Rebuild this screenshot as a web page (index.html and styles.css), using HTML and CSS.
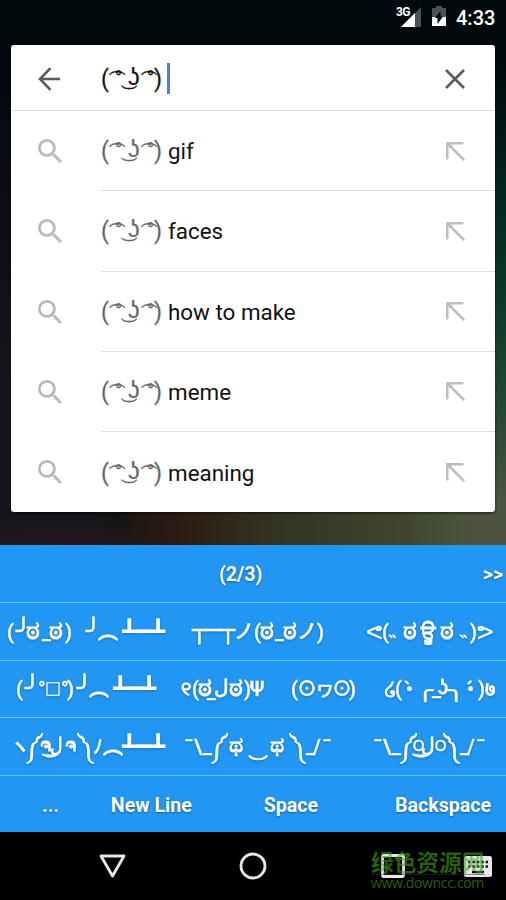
FILE: index.html
```
<!DOCTYPE html>
<html lang="en"><head><meta charset="utf-8"><title>Emoticon keyboard</title><link rel="stylesheet" href="styles.css"></head>
<body>
<svg class="defs" width="0" height="0"><defs>
<symbol id="search" viewBox="3 3 17.5 17.5"><path d="M15.500 14h-.79l-.28-.27A6.470 6.470 0 0 0 16 9.500 6.500 6.500 0 1 0 9.500 16c1.610 0 3.090-.59 4.230-1.570l.27.28v.79l5 4.990L20.490 19l-4.990-5zm-6 0a4.500 4.500 0 1 1 0-9 4.500 4.500 0 0 1 0 9z"/></symbol>
<symbol id="insert" viewBox="0 0 18 18"><path d="M1.200 16.500V1.200h15.300M1.200 1.200l16 16"/></symbol>
<symbol id="lenny" viewBox="0 0 62 34"><g><text x="0" y="25">(</text><text x="4" y="25" font-size="21">&#160;͡</text><text x="14" y="22" font-size="19">°</text><text x="16" y="23" font-size="21">&#160;͜</text><text x="27" y="23" font-size="23">ʖ</text><text x="36" y="25" font-size="21">&#160;͡</text><text x="46" y="22" font-size="19">°</text><text x="53" y="25">)</text></g></symbol>
<g id="table"><text class="box heavy" x="0" y="0" textLength="43" lengthAdjust="spacingAndGlyphs">┻━┻</text></g>
</defs></svg>
<header class="status">
<div class="net"><span>3G</span><svg width="21" height="21" viewBox="0 0 21 21"><path fill="#4b5254" d="M21 0v20H1z"/><path fill="#fff" d="M15 6v14H1z"/></svg></div>
<svg class="battery" width="14" height="21" viewBox="0 0 14 21"><path fill="#4b5254" d="M4 0h6v2h4v9H0V2h4z"/><path fill="#fff" d="M0 11h14v9H0z"/><path d="M8.500 5v5.500H11L5.500 18v-6H3z" fill="#00090b"/></svg>
<time>4:33</time>
</header>
<main class="card">
<div class="query"><svg class="back" width="23" height="24" viewBox="0 0 23 24"><path d="M22 12H2M12.500 1.200 2 12l10.500 10.800"/></svg>
<div class="entry"><svg class="lenny"><use href="#lenny"/></svg><i class="caret"></i></div>
<svg class="clear" width="20" height="20" viewBox="0 0 20 20"><path d="m1 1 18 18M19 1 1 19"/></svg></div>
<div class="item"><svg class="mag"><use href="#search"/></svg><div class="label"><svg class="lenny"><use href="#lenny"/></svg><span>gif</span><svg class="ins"><use href="#insert"/></svg></div></div>
<div class="item"><svg class="mag"><use href="#search"/></svg><div class="label"><svg class="lenny"><use href="#lenny"/></svg><span>faces</span><svg class="ins"><use href="#insert"/></svg></div></div>
<div class="item"><svg class="mag"><use href="#search"/></svg><div class="label"><svg class="lenny"><use href="#lenny"/></svg><span>how to make</span><svg class="ins"><use href="#insert"/></svg></div></div>
<div class="item"><svg class="mag"><use href="#search"/></svg><div class="label"><svg class="lenny"><use href="#lenny"/></svg><span>meme</span><svg class="ins"><use href="#insert"/></svg></div></div>
<div class="item"><svg class="mag"><use href="#search"/></svg><div class="label"><svg class="lenny"><use href="#lenny"/></svg><span>meaning</span><svg class="ins"><use href="#insert"/></svg></div></div>
</main>
<section class="keys">
<div class="row pager"><span></span><span>(2/3)</span><span class="next">&gt;&gt;</span></div>
<div class="row">
<svg class="key" viewBox="0 0 175 57" width="175"><text x="7" y="36">(</text><text class="box" x="16" y="36" textLength="15" lengthAdjust="spacingAndGlyphs">╯</text><text class="kn" x="26" y="36">ಠ</text><text x="42" y="36">_</text><text class="kn" x="49" y="36">ಠ</text><text x="65" y="36">)</text><text class="box" x="86" y="36" textLength="15" lengthAdjust="spacingAndGlyphs">╯</text><text class="thin" x="98" y="36">︵</text><use href="#table" x="122" y="36"/></svg>
<svg class="key" viewBox="175 0 165 57" width="165"><text class="box" x="192" y="35" textLength="43" lengthAdjust="spacingAndGlyphs">┬─┬</text><text x="234" y="36">ノ</text><text x="254" y="36">(</text><text class="kn" x="260" y="36">ಠ</text><text x="275" y="36">_</text><text class="kn" x="283" y="36">ಠ</text><text x="297" y="36">ノ</text><text x="317" y="36">)</text></svg>
<svg class="key" viewBox="340 0 166 57" width="166"><text x="366" y="36" textLength="17" lengthAdjust="spacingAndGlyphs">ᕙ</text><text x="382" y="36">(</text><text x="389" y="38">˵</text><text class="kn" x="403" y="36">ಠ</text><text class="thin" x="421" y="36">ਊ</text><text class="kn" x="440" y="36">ಠ</text><text x="460" y="38">˵</text><text x="470" y="36">)</text><text x="477" y="36" textLength="17" lengthAdjust="spacingAndGlyphs">ᕗ</text></svg>
</div>
<div class="row">
<svg class="key" viewBox="0 0 175 57" width="175"><text x="16" y="36">(</text><text class="box" x="25" y="36" textLength="15" lengthAdjust="spacingAndGlyphs">╯</text><text x="38" y="36">°</text><text x="45" y="35" font-size="16">□</text><text x="61" y="36">°</text><text x="67" y="36">)</text><text class="box" x="77" y="36" textLength="15" lengthAdjust="spacingAndGlyphs">╯</text><text class="thin" x="89" y="36">︵</text><use href="#table" x="113" y="36"/></svg>
<svg class="key" viewBox="175 0 105 57" width="105"><text class="bold" x="181" y="36">୧</text><text x="192" y="36">(</text><text class="kn" x="198" y="36">ಠ</text><text x="207" y="38">_</text><text class="thin" x="214" y="34">ل</text><text class="kn" x="229" y="36">ಠ</text><text x="244" y="36">)</text><text x="250" y="36">Ψ</text></svg>
<svg class="key" viewBox="280 0 90 57" width="90"><text x="291" y="36">(</text><text x="297" y="36">⊙</text><text x="315" y="36">ヮ</text><text x="332" y="36">⊙</text><text x="349" y="36">)</text></svg>
<svg class="key" viewBox="370 0 136 57" width="136"><text x="384" y="36">໒</text><text x="395" y="36">(</text><text x="406" y="36">•̀</text><text class="box small" x="417" y="37" textLength="16" lengthAdjust="spacingAndGlyphs">╭</text><text x="432" y="36">_</text><text class="bold" x="438" y="34">ʖ</text><text class="box small" x="448" y="37" textLength="16" lengthAdjust="spacingAndGlyphs">╮</text><text x="467" y="36">•́</text><text x="478" y="36">)</text><text class="bold" x="485" y="36">७</text></svg>
</div>
<div class="row">
<svg class="key" viewBox="0 0 175 57" width="175"><text x="10" y="36">ヽ</text><text class="thin" x="26" y="36">༼</text><text class="thin" x="40" y="33" font-size="18">ຈ</text><text class="thin" x="50" y="34" textLength="13" lengthAdjust="spacingAndGlyphs">ل͜</text><text class="thin" x="65" y="33" font-size="18">ຈ</text><text class="thin" x="78" y="36">༽</text><text x="93" y="36">ﾉ</text><text class="thin" x="103" y="36">︵</text><use href="#table" x="122" y="36"/></svg>
<svg class="key" viewBox="175 0 170 57" width="170"><text x="184" y="36">¯</text><text x="194" y="36">\</text><text x="203" y="35">_</text><text class="thin" x="211" y="36">༼</text><text class="tha" x="229" y="34">ಥ</text><text class="thin" x="248" y="37" textLength="20" lengthAdjust="spacingAndGlyphs">‿</text><text class="tha" x="270" y="34">ಥ</text><text class="thin" x="290" y="36">༽</text><text x="306" y="35">_</text><text x="313" y="36">/</text><text x="322" y="36">¯</text></svg>
<svg class="key" viewBox="345 0 161 57" width="161"><text x="373" y="36">¯</text><text x="383" y="36">\</text><text x="392" y="35">_</text><text class="thin" x="400" y="36">༼</text><text x="413" y="38" font-size="22">ᴼ</text><text class="thin" x="421" y="34" textLength="14" lengthAdjust="spacingAndGlyphs">ل͜</text><text x="435" y="38" font-size="22">ᴼ</text><text class="thin" x="444" y="36">༽</text><text x="460" y="35">_</text><text x="467" y="36">/</text><text x="476" y="36">¯</text></svg>
</div>
<div class="row actions"><span>...</span><span>New Line</span><span>Space</span><span>Backspace</span></div>
</section>
<nav class="nav">
<svg width="27" height="24" viewBox="0 0 27 24"><path d="M2 2h23L13.500 22z"/></svg>
<svg width="28" height="28" viewBox="0 0 28 28"><circle cx="14" cy="14" r="12"/></svg>
<svg width="24" height="24" viewBox="0 0 24 24"><rect x="1.500" y="1.500" width="21" height="21" rx="1"/></svg>
<svg class="kb" width="28" height="21" viewBox="0 0 28 21"><rect width="28" height="21" rx="2.500"/><path d="M4 6h20M4 10.500h20" stroke-dasharray="2.500 1.900"/><path d="M8 16h12"/></svg>
<div class="mark"><b>绿色资源网</b><span>www.downcc.com</span></div>
</nav>
</body></html>
```
FILE: styles.css
```
*{box-sizing:border-box}
body{margin:0;width:506px;height:900px;overflow:hidden;color:#111;font-family:Roboto,"Noto Sans CJK JP",sans-serif;
background:linear-gradient(#00090b,#00090b 60px,#04251f 190px,#0a3a2a 300px,#2c4a36 430px,#4a5540 500px,#50503f) right top/11px 545px no-repeat,
linear-gradient(#00090b,#00090bfa 60px,#00090b99 170px,transparent 380px),
radial-gradient(ellipse 45px 90px at 438px 515px,#3d533570,transparent),
radial-gradient(ellipse 120px 36px at 75px 550px,#30171fcc,transparent),
linear-gradient(90deg,#17141d,#15151b 90px,#101412 115px,#21170f 140px,#2c1b13 180px,#302e20 250px,#373a28 320px,#41452d 410px,#4e513d 460px,#50503f)}
.defs{display:block;height:0}
svg{display:block;flex:none}
.status{height:45px;color:#fff;display:flex;justify-content:flex-end;align-items:flex-start;padding:6px 11px 0}
.net{display:flex;width:25px;margin-right:11px;padding-top:1px}
.net span{width:4px;font:700 12px/10px Roboto,sans-serif;letter-spacing:-.7px;white-space:nowrap;position:relative;z-index:1}
.battery{margin-right:10px}
.status time{font-size:20px;line-height:24px;font-weight:500;width:39px;white-space:nowrap}
.card{margin:0 11px;background:#fff;height:467px;border-radius:3px;box-shadow:0 1px 3px #0009}
.query{height:66px;display:flex;align-items:center;border-bottom:1px solid #dedede;padding:2px 30px 0 27px}
.back,.clear{fill:none;stroke:#5b5b5b;stroke-width:2.600}
.entry{display:flex;align-items:center;flex:1;margin-left:40px}
.caret{width:3px;height:31px;background:#4a82de;margin-left:4px}
.lenny{width:62px;height:34px;font-size:23px;fill:#111;stroke:#111;stroke-width:.2}
.item{height:80.250px;display:flex;align-items:center;padding-left:27px}
.item .lenny{fill:#666;stroke:#666}
.mag{width:24px;height:24px;fill:#b9b9b9}
.label{display:flex;align-items:center;flex:1;margin-left:39px;height:100%;padding:1px 30px 0 0;border-bottom:1px solid #dedede;font-size:22.400px}
.label span{flex:1;margin-left:5px}
.item:last-child .label{border:0}
.ins{width:19px;height:19px;fill:none;stroke:#bdbdbd;stroke-width:2.400}
.keys{margin-top:33px;background:#2196f3;color:#fff;font-weight:700;font-size:19.600px;text-shadow:0 1px 2px #0d4f8acc;height:287px}
.row{height:57.750px;display:flex;align-items:center;border-bottom:1px solid #6fc0fb}
.row:last-child{border:0}
.pager{display:grid;grid-template-columns:219px auto 1fr;padding:3px 3px 0 0}
.next{text-align:right}
.actions{padding:2px 15px 0 42px;justify-content:space-between}
.actions span:nth-child(1){width:17px}
.actions span:nth-child(2){margin-left:-20px}
.actions span:nth-child(3){margin-right:5px}
.key{height:57px;fill:#fff;font-size:20px;font-weight:500;stroke:#fff;stroke-width:.4;text-shadow:none;filter:drop-shadow(0 1px 1px #0d4f8a80)}
.kn{font-size:26px;stroke-width:1.200}
.tha{font-size:22px;stroke-width:1}
.thin{stroke-width:.8}
.bold{stroke-width:1}
.box{font-family:"DejaVu Sans Mono";font-size:24px;font-weight:400;stroke-width:.5}
.small{font-size:20px}
.heavy{font-size:22px;stroke-width:0}
.nav{height:68px;background:#000;display:flex;align-items:center;padding-left:99px;position:relative;fill:none;stroke:#e8e8e8;stroke-width:2.800;stroke-linejoin:round}
.nav svg:nth-child(2){margin-left:113px}
.nav svg:nth-child(3){margin-left:114px}
.kb{margin-left:59px;stroke:none;fill:#e8e8e8}
.kb path{stroke:#111;stroke-width:2.400}
.mark{position:absolute;left:371px;top:17px;width:114px;color:#44a01c99}
.mark b{display:block;font:700 22.700px/25px "Noto Sans CJK SC",sans-serif;border-bottom:1px solid #3338;white-space:nowrap}
.mark span{display:block;font:14px/15px "Open Sans",sans-serif;letter-spacing:-.35px}
```
